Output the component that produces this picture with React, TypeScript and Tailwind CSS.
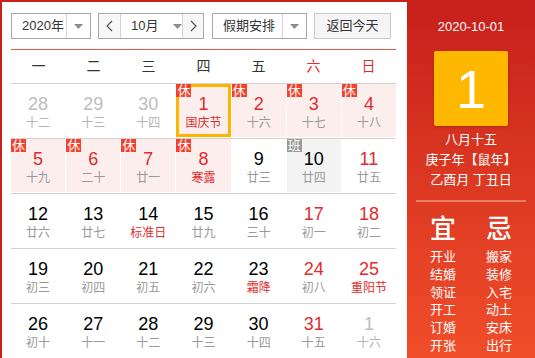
import React from "react";

type Day = {
  day: number;
  lunar: string;
  other?: boolean;
  redNum?: boolean;
  redLunar?: boolean;
  badge?: "休" | "班";
  selected?: boolean;
};

const weeks: Day[][] = [
  [
    { day: 28, lunar: "十二", other: true },
    { day: 29, lunar: "十三", other: true },
    { day: 30, lunar: "十四", other: true },
    { day: 1, lunar: "国庆节", redNum: true, redLunar: true, badge: "休", selected: true },
    { day: 2, lunar: "十六", redNum: true, badge: "休" },
    { day: 3, lunar: "十七", redNum: true, badge: "休" },
    { day: 4, lunar: "十八", redNum: true, badge: "休" },
  ],
  [
    { day: 5, lunar: "十九", redNum: true, badge: "休" },
    { day: 6, lunar: "二十", redNum: true, badge: "休" },
    { day: 7, lunar: "廿一", redNum: true, badge: "休" },
    { day: 8, lunar: "寒露", redNum: true, redLunar: true, badge: "休" },
    { day: 9, lunar: "廿三" },
    { day: 10, lunar: "廿四", badge: "班" },
    { day: 11, lunar: "廿五", redNum: true },
  ],
  [
    { day: 12, lunar: "廿六" },
    { day: 13, lunar: "廿七" },
    { day: 14, lunar: "标准日", redLunar: true },
    { day: 15, lunar: "廿九" },
    { day: 16, lunar: "三十" },
    { day: 17, lunar: "初一", redNum: true },
    { day: 18, lunar: "初二", redNum: true },
  ],
  [
    { day: 19, lunar: "初三" },
    { day: 20, lunar: "初四" },
    { day: 21, lunar: "初五" },
    { day: 22, lunar: "初六" },
    { day: 23, lunar: "霜降", redLunar: true },
    { day: 24, lunar: "初八", redNum: true },
    { day: 25, lunar: "重阳节", redNum: true, redLunar: true },
  ],
  [
    { day: 26, lunar: "初十" },
    { day: 27, lunar: "十一" },
    { day: 28, lunar: "十二" },
    { day: 29, lunar: "十三" },
    { day: 30, lunar: "十四" },
    { day: 31, lunar: "十五", redNum: true },
    { day: 1, lunar: "十六", other: true },
  ],
];

const weekNames = ["一", "二", "三", "四", "五", "六", "日"];
const yi = ["开业", "结婚", "领证", "开工", "订婚", "开张"];
const ji = ["搬家", "装修", "入宅", "动土", "安床", "出行"];

function Caret() {
  return (
    <svg width="9" height="5" viewBox="0 0 9 5">
      <path d="M0 0h9L4.5 5z" fill="#8c8c8c" />
    </svg>
  );
}

function Chevron({ dir }: { dir: "left" | "right" }) {
  return (
    <svg width="7" height="12" viewBox="0 0 7 12">
      <polyline
        points={dir === "left" ? "6,1 1,6 6,11" : "1,1 6,6 1,11"}
        fill="none"
        stroke="#555"
        strokeWidth="1.2"
      />
    </svg>
  );
}

function Cell({ d }: { d: Day }) {
  let bg = "bg-white";
  if (d.badge === "休") bg = "bg-[#fdeeee]";
  if (d.badge === "班") bg = "bg-[#f3f3f3]";

  let numColor = "text-black";
  if (d.redNum) numColor = "text-[#e22b2b]";
  if (d.other) numColor = "text-[#bdbdbd]";

  let lunarColor = "text-[#999]";
  if (d.redLunar) lunarColor = "text-[#e22b2b]";
  if (d.other) lunarColor = "text-[#b5b5b5]";

  return (
    <div className={`relative h-[53px] flex flex-col items-center pt-[10px] ${bg}`}>
      {d.selected && (
        <div className="absolute inset-0 border-[3px] border-[#ffb400]" />
      )}
      {d.badge && (
        <div
          className={`absolute top-0 left-0 w-[15px] h-[13px] flex items-center justify-center text-[13px] leading-none text-white ${
            d.badge === "休" ? "bg-[#f2412f]" : "bg-[#999]"
          }`}
        >
          {d.badge}
        </div>
      )}
      <span className={`text-[18px] leading-[20px] ${numColor}`}>{d.day}</span>
      <span className={`mt-px text-[12px] leading-[16px] whitespace-nowrap ${lunarColor}`}>
        {d.lunar}
      </span>
    </div>
  );
}

export default function App() {
  return (
    <div className="w-[535px] h-[358px] overflow-hidden flex border-l-2 border-t-2 border-[#c8201c] bg-white font-['Liberation_Sans','Noto_Sans_CJK_SC',sans-serif]">
      {/* ── 左侧日历 ── */}
      <div className="w-[405px] shrink-0 pl-[9px] pr-[11px] pt-[11px]">
        <div className="flex items-center h-[26px] text-[13px] text-[#333] whitespace-nowrap">
          <div className="w-[80px] h-full flex border border-[#a9a9a9]">
            <span className="flex-1 flex items-center pl-[10px] whitespace-nowrap">2020年</span>
            <span className="w-[24px] shrink-0 flex items-center justify-center border-l border-[#d4d4d4]">
              <Caret />
            </span>
          </div>
          <div className="ml-[7px] w-[106px] h-full flex border border-[#a9a9a9]">
            <span className="w-[22px] shrink-0 flex items-center justify-center bg-[#f7f7f7] border-r border-[#d4d4d4]">
              <Chevron dir="left" />
            </span>
            <span className="flex-1 flex items-center pl-[10px] whitespace-nowrap">
              10月
              <span className="ml-[15px] flex">
                <Caret />
              </span>
            </span>
            <span className="w-[21px] shrink-0 flex items-center justify-center bg-[#f7f7f7] border-l border-[#d4d4d4]">
              <Chevron dir="right" />
            </span>
          </div>
          <div className="ml-[8px] w-[95px] h-full flex border border-[#a9a9a9]">
            <span className="flex-1 flex items-center pl-[10px] whitespace-nowrap">假期安排</span>
            <span className="w-[24px] shrink-0 flex items-center justify-center border-l border-[#d4d4d4]">
              <Caret />
            </span>
          </div>
          <button className="ml-[7px] w-[77px] h-full flex items-center justify-center border border-[#c9c9c9] bg-[#f5f5f5] text-[13px] text-[#333] whitespace-nowrap">
            返回今天
          </button>
        </div>

        <div className="mt-[10px] h-px bg-[#e8574b]" />

        <div className="grid grid-cols-7 h-[33px] items-center text-[14px] text-[#333]">
          {weekNames.map((w, i) => (
            <span
              key={w}
              className={`text-center ${i >= 5 ? "text-[#e22b2b]" : ""}`}
            >
              {w}
            </span>
          ))}
        </div>

        {weeks.map((week, wi) => (
          <div key={wi} className="border-t border-[#d2d2d2] pb-px">
            <div className="grid grid-cols-7 gap-px">
              {week.map((d, di) => (
                <Cell key={di} d={d} />
              ))}
            </div>
          </div>
        ))}
      </div>

      {/* ── 右侧详情 ── */}
      <div className="flex-1 flex flex-col items-center bg-linear-to-b from-[#c71f1b] to-[#f04d2a] text-white">
        <p className="mt-[16px] text-[13px] leading-[18px]">2020-10-01</p>
        <div className="mt-[15px] w-[74px] h-[75px] rounded-[2px] bg-[#ffb800] shadow-[0_1px_3px_rgba(120,20,0,0.35)] flex items-center justify-center text-[54px] leading-none">
          1
        </div>
        <div className="mt-[4px] flex flex-col items-center text-[13px] leading-[20px] whitespace-nowrap">
          <p>八月十五</p>
          <p>庚子年【鼠年】</p>
          <p>乙酉月 丁丑日</p>
        </div>
        <div className="mt-[10px] w-[110px] h-[2px] bg-[#ec7a68]" />
        <div className="mt-[12px] w-[110px] flex justify-between px-[14px]">
          {[
            { title: "宜", items: yi },
            { title: "忌", items: ji },
          ].map((col) => (
            <div key={col.title} className="flex flex-col items-center">
              <span className="text-[26px] leading-[30px] font-medium">{col.title}</span>
              <div className="mt-[4px] flex flex-col items-center text-[13px] leading-[17.8px]">
                {col.items.map((it) => (
                  <span key={it}>{it}</span>
                ))}
              </div>
            </div>
          ))}
        </div>
      </div>
    </div>
  );
}
